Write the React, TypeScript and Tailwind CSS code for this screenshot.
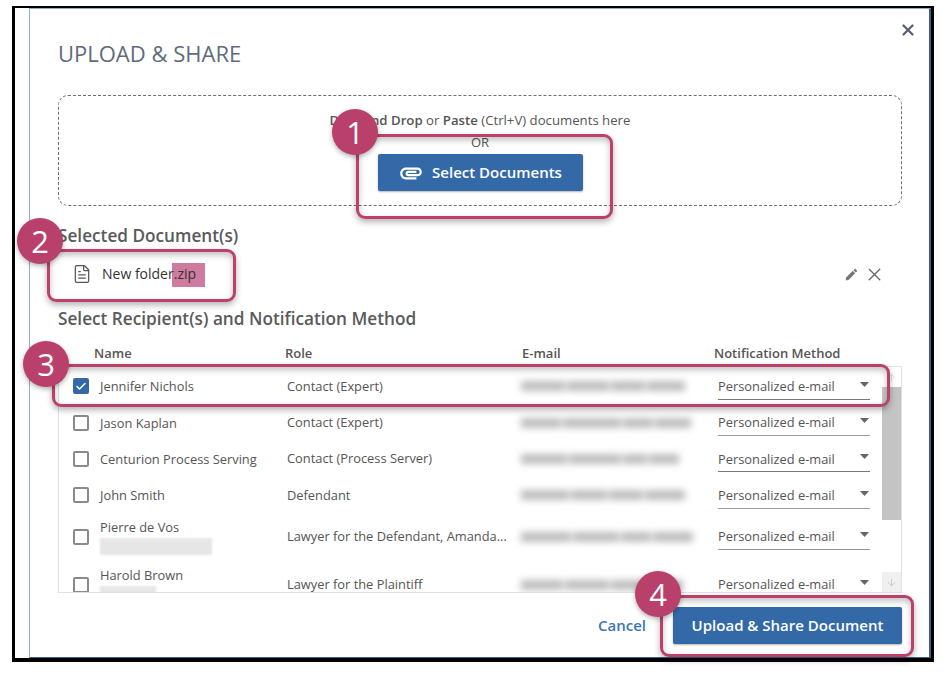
import { ArrowDown, ArrowUp, Check, FileText, X } from "lucide-react";
import { MdAttachment, MdEdit } from "react-icons/md";

type Row = { name: string; sub?: number; role: string; checked?: boolean; rowClass: string; line: string; segs: number[] };

const rows: Row[] = [
  { name: "Jennifer Nichols", role: "Contact (Expert)", checked: true, rowClass: "h-[36.4px]", line: "border-[#777]", segs: [44, 42, 34, 38] },
  { name: "Jason Kaplan", role: "Contact (Expert)", rowClass: "h-[36.4px]", line: "border-[#999]", segs: [40, 58, 30, 36] },
  { name: "Centurion Process Serving", role: "Contact (Process Server)", rowClass: "h-[36.4px]", line: "border-[#777]", segs: [46, 52, 24, 30] },
  { name: "John Smith", role: "Defendant", rowClass: "h-[36.4px]", line: "border-[#999]", segs: [48, 36, 34, 40] },
  { name: "Pierre de Vos", sub: 112, role: "Lawyer for the Defendant, Amanda...", rowClass: "h-[46px]", line: "border-[#999]", segs: [50, 46, 30, 40] },
  { name: "Harold Brown", sub: 56, role: "Lawyer for the Plaintiff", rowClass: "h-[48px] pt-[2px]", line: "border-transparent", segs: [42, 44, 40, 30] },
];

function Callout({ n, cx, cy }: { n: number; cx: string; cy: string }) {
  return (
    <div
      className={`absolute ${cx} ${cy} flex h-[46px] w-[46px] items-center justify-center rounded-full bg-[#b9406a] text-[31px] leading-none text-white shadow-[0_2px_5px_rgba(0,0,0,0.3)]`}
    >
      {n}
    </div>
  );
}

function Box({ pos }: { pos: string }) {
  return <div className={`absolute ${pos} rounded-[9px] border-[3px] border-[#bb4169] shadow-[0_3px_6px_rgba(0,0,0,0.3),inset_0_3px_6px_rgba(0,0,0,0.25)]`} />;
}

export default function App() {
  return (
    <div className="relative h-[674px] w-[950px] overflow-hidden bg-white font-['Open_Sans',sans-serif] text-[#4a4a4a]">
      <div className="absolute left-[12px] top-[6px] flex h-[656px] w-[922px] border-[3px] border-b-[4px] border-t-[2px] border-black bg-white pl-[14px]">
        <div className="relative flex h-full flex-1 flex-col border border-r-[2px] border-[#8fb0d6] border-r-[#3f5f86] border-b-[#3f5f86] bg-white pl-[28px] pr-[27px] pt-[30px]">
          <X className="absolute right-[12px] top-[12px] h-[18px] w-[18px] text-[#5a6470]" strokeWidth={3} />
          <h1 className="h-[30px] text-[22px] font-normal leading-[28px] text-[#5f6b7b]">UPLOAD &amp; SHARE</h1>

          <div className="mt-[26px] flex h-[111px] flex-col items-center rounded-[10px] border border-dashed border-[#6f6f6f] pt-[14px]">
            <p className="h-[21px] text-[13.2px] leading-[20px] text-[#555]">
              <span className="font-semibold">Drag and Drop</span> or <span className="font-semibold">Paste</span> (Ctrl+V) documents here
            </p>
            <p className="h-[23px] text-[13px] leading-[23px] text-[#555]">OR</p>
            <button className="flex h-[37px] w-[205px] items-center justify-center gap-[8px] rounded-[2px] bg-[#3469a8] text-[15px] font-semibold text-white shadow-[0_1px_2px_rgba(0,0,0,0.3)]">
              <MdAttachment className="h-[26px] w-[26px]" />
              Select Documents
            </button>
          </div>

          <h2 className="mt-[18px] h-[24px] text-[17.2px] font-semibold leading-[24px] text-[#5a5a5a]">Selected Document(s)</h2>

          <div className="mt-[10px] flex h-[32px] items-center pl-[14px] pr-[17px]">
            <div className="absolute left-[142px] top-[254px] h-[24px] w-[33px] bg-[#cf7a9f]" />
            <FileText className="h-[20px] w-[20px] text-[#555]" strokeWidth={1.5} />
            <span className="relative ml-[10px] mt-[-2px] text-[14px] text-[#333]">New folder.zip</span>
            <MdEdit className="ml-auto h-[15px] w-[15px] text-[#777]" />
            <X className="ml-[5px] h-[21px] w-[21px] text-[#666]" strokeWidth={1.6} />
          </div>

          <h2 className="mt-[17px] h-[24px] text-[17.2px] font-semibold leading-[24px] text-[#5a5a5a]">Select Recipient(s) and Notification Method</h2>

          <div className="mt-[11px] flex h-[24px] items-center text-[13px] font-semibold text-[#555]">
            <span className="ml-[36px] w-[191px]">Name</span>
            <span className="w-[237px]">Role</span>
            <span className="w-[192px]">E-mail</span>
            <span>Notification Method</span>
          </div>

          <div className="flex h-[227px] overflow-hidden border border-[#e0e0e0] border-t-[#e4e4e4]">
            <div className="flex-1 overflow-hidden pt-[1px] text-[12.85px] text-[#555]">
              {rows.map((r) => (
                <div key={r.name} className={`flex items-center ${r.rowClass}`}>
                  <span
                    className={`ml-[14px] flex h-[16px] w-[16px] shrink-0 items-center justify-center rounded-[2px] border-2 ${
                      r.checked ? "border-[#3469a8] bg-[#3469a8]" : "border-[#8a8a8a] bg-white"
                    }`}
                  >
                    {r.checked && <Check className="h-[13px] w-[13px] text-white" strokeWidth={3} />}
                  </span>
                  <div className="ml-[11px] w-[187px] shrink-0">
                    <div className="leading-[18px]">{r.name}</div>
                    {r.sub && <div className="mt-[2px] h-[17px] bg-[#e6e6e6] blur-[1px]" style={{ width: r.sub }} />}
                  </div>
                  <span className="w-[234px] shrink-0 truncate pr-[6px]">{r.role}</span>
                  <div className="flex w-[197px] shrink-0 items-center gap-[2px] blur-[3.5px]">
                    {r.segs.map((w, i) => (
                      <div key={i} className="h-[10px] bg-[#bdbdbd]" style={{ width: w }} />
                    ))}
                  </div>
                  <div className={`flex h-[27px] w-[152px] shrink-0 items-center justify-between border-b-[1.5px] pr-[1px] pt-[2px] ${r.line}`}>
                    <span>Personalized e-mail</span>
                    <svg width="9" height="5" viewBox="0 0 9 5" className="mb-[5px] fill-[#666]">
                      <polygon points="0,0 9,0 4.5,5" />
                    </svg>
                  </div>
                </div>
              ))}
            </div>
            <div className="flex w-[19px] shrink-0 flex-col items-center">
              <div className="flex h-[20px] items-center justify-center">
                <ArrowUp className="h-[11px] w-[11px] text-[#d8d8d8]" strokeWidth={1.5} />
              </div>
              <div className="h-[133px] w-full bg-[#c4c4c4]" />
              <div className="flex-1" />
              <div className="flex h-[20px] w-full items-center justify-center bg-[#f0f0f0]">
                <ArrowDown className="h-[11px] w-[11px] text-[#bbb]" strokeWidth={1.5} />
              </div>
            </div>
          </div>

          <div className="mt-[14px] flex items-center justify-end">
            <span className="mr-[27px] text-[15px] font-semibold text-[#3a78b5]">Cancel</span>
            <button className="h-[37px] w-[229px] rounded-[2px] bg-[#3469a8] text-[15px] font-semibold text-white shadow-[0_1px_2px_rgba(0,0,0,0.3)]">
              Upload &amp; Share Document
            </button>
          </div>
        </div>
      </div>

      <Box pos="left-[356px] top-[134px] h-[85px] w-[257px]" />
      <Box pos="left-[47px] top-[249px] h-[53px] w-[189px]" />
      <Box pos="left-[52px] top-[364px] h-[43px] w-[838px]" />
      <Box pos="left-[660px] top-[595px] h-[62px] w-[254px]" />

      <Callout n={1} cx="left-[332px]" cy="top-[109px]" />
      <Callout n={2} cx="left-[17px]" cy="top-[218px]" />
      <Callout n={3} cx="left-[23px]" cy="top-[341px]" />
      <Callout n={4} cx="left-[635px]" cy="top-[571px]" />
    </div>
  );
}
